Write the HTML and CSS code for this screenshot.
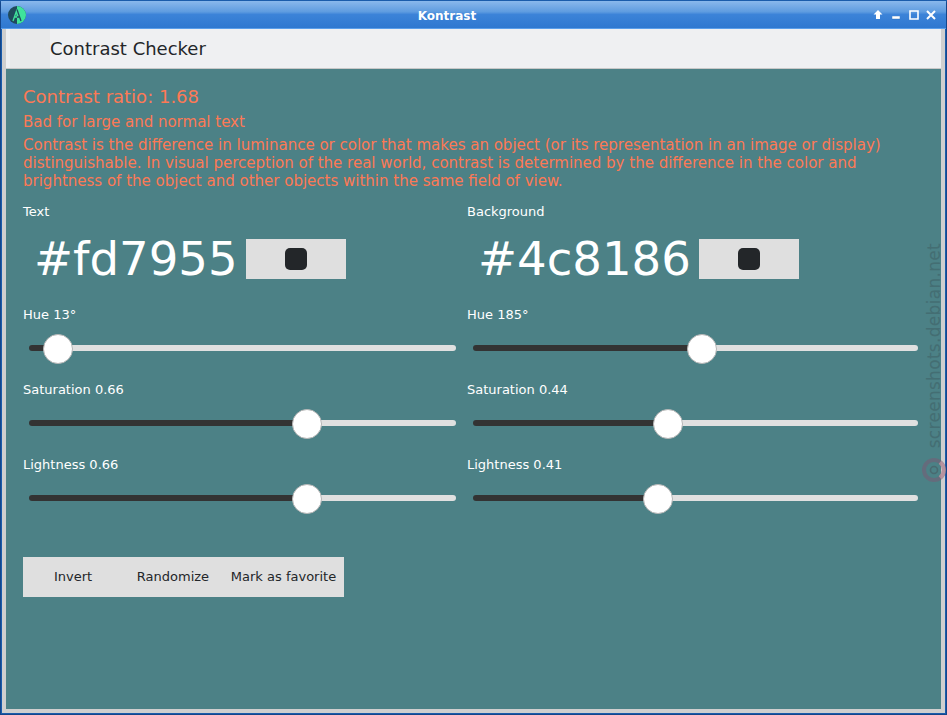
FILE: index.html
```html
<!DOCTYPE html>
<html lang="en">
<head>
<meta charset="utf-8">
<title>Kontrast</title>
<link rel="stylesheet" href="styles.css">
</head>
<body>
<div class="window">
  <header class="titlebar">
    <svg class="app-icon" width="18" height="18" viewBox="0 0 18 18">
      <circle cx="9" cy="9" r="9" fill="#1f4a5c"/>
      <path d="M9 0a9 9 0 0 1 0 18z" fill="#3fe39b"/>
      <path d="M5 15 9 3.5V11H6.5" fill="none" stroke="#3fe39b" stroke-width="1.3"/>
      <path d="M13 15 9 3.5M9 11h2.5" fill="none" stroke="#1f4a5c" stroke-width="1.3"/>
    </svg>
    <span class="win-title">Kontrast</span>
    <div class="win-buttons">
      <svg width="10" height="10" viewBox="0 0 10 10"><path d="M5 0 9.5 4.5H7V9H3V4.5H.5z" fill="#fff"/></svg>
      <svg width="8" height="4" viewBox="0 0 8 4" class="btn-min"><path d="M0 0h8v3H0z" fill="#fff" stroke="#1d5fae" stroke-width=".4"/></svg>
      <svg width="10" height="10" viewBox="0 0 10 10"><path d="M1 1h8v8H1z" fill="none" stroke="#fff" stroke-width="1.6"/></svg>
      <svg width="10" height="10" viewBox="0 0 10 10"><path d="M1 1l8 8M9 1l-8 8" fill="none" stroke="#fff" stroke-width="2"/></svg>
    </div>
  </header>
  <div class="client">
    <div class="appbar">
      <div class="appbar-handle"></div>
      <h1 class="appbar-title">Contrast Checker</h1>
    </div>
    <main class="content">
      <div class="ratio">Contrast ratio: 1.68</div>
      <div class="verdict">Bad for large and normal text</div>
      <p class="desc">Contrast is the difference in luminance or color that makes an object (or its representation in an image or display) distinguishable. In visual perception of the real world, contrast is determined by the difference in the color and brightness of the object and other objects within the same field of view.</p>
      <div class="columns">
        <section class="col">
          <div class="label">Text</div>
          <div class="hexrow"><span class="hex">#fd7955</span><span class="swatch-btn"><i class="swatch"></i></span></div>
          <div class="label">Hue 13°</div>
          <div class="slider"><span class="fill w-hue1"></span><span class="track"></span></div>
          <div class="label">Saturation 0.66</div>
          <div class="slider"><span class="fill w-sat1"></span><span class="track"></span></div>
          <div class="label">Lightness 0.66</div>
          <div class="slider"><span class="fill w-lig1"></span><span class="track"></span></div>
        </section>
        <section class="col">
          <div class="label">Background</div>
          <div class="hexrow"><span class="hex">#4c8186</span><span class="swatch-btn"><i class="swatch"></i></span></div>
          <div class="label">Hue 185°</div>
          <div class="slider"><span class="fill w-hue2"></span><span class="track"></span></div>
          <div class="label">Saturation 0.44</div>
          <div class="slider"><span class="fill w-sat2"></span><span class="track"></span></div>
          <div class="label">Lightness 0.41</div>
          <div class="slider"><span class="fill w-lig2"></span><span class="track"></span></div>
        </section>
      </div>
      <div class="actions">
        <span class="act act-invert">Invert</span>
        <span class="act act-random">Randomize</span>
        <span class="act act-fav">Mark as favorite</span>
      </div>
    </main>
  </div>
  <div class="watermark">
    <span class="wm-text">screenshots.debian.net</span>
    <svg class="wm-icon" width="24" height="24" viewBox="0 0 24 24"><circle cx="12" cy="12" r="10" fill="none" stroke="#6f6478" stroke-width="4" opacity=".7"/><path d="M18 4.2A10 10 0 0 1 18 19.8" fill="none" stroke="#c99aa5" stroke-width="4" opacity=".7"/><circle cx="12" cy="12" r="3.5" fill="none" stroke="#496a70" stroke-width="1.6"/></svg>
  </div>
</div>
</body>
</html>
```
FILE: styles.css
```css
* { box-sizing: border-box; margin: 0; padding: 0; }
html, body { width: 947px; height: 715px; overflow: hidden; background: #1c5ca8; }
body { font-family: "DejaVu Sans", sans-serif; }
.window {
  position: relative;
  width: 947px; height: 715px;
  display: flex; flex-direction: column;
  background: #1b5cab;
  border: 1px solid #14468a;
  border-top-color: #1b5cab;
  border-radius: 4px 4px 0 0;
}
.titlebar {
  height: 28px; flex: none;
  display: flex; align-items: center;
  padding: 0 6px 0 7px;
  position: relative;
  background: linear-gradient(#8ab8ec 0, #5f9ce0 40%, #3c83d8 50%, #2f78d0 100%);
  border-bottom: 1px solid #5a9eea;
}
.app-icon { flex: none; }
.win-title {
  position: absolute; left: 0; right: 53px; top: 8px;
  text-align: center;
  font: bold 12px/14px "DejaVu Sans", sans-serif;
  color: #fff;
}
.win-buttons { margin-left: auto; display: flex; align-items: center; gap: 7px; padding: 1px 4px 0 0; }
.win-buttons svg { display: block; }
.btn-min { margin-top: 6px; margin-left: 2px; margin-right: 2px; }
.client {
  flex: 1; min-height: 0;
  display: flex; flex-direction: column;
  margin: 0 1px 1px 1px;
  border: 4px solid #cfcfcf;
  border-top: 0;
  background: #4c8186;
}
.appbar {
  height: 40px; flex: none;
  display: flex; align-items: center;
  background: #eff0f2;
  border-bottom: 1px solid #c8c8c8;
}
.appbar-handle { width: 44px; height: 100%; background: #e8e9ea; flex: none; border-left: 4px solid #eff0f2; }
.appbar-title { font-size: 18px; font-weight: 400; color: #232629; line-height: 40px; }
.content { flex: 1; padding: 17px 17px 0; color: #fd7955; }
.ratio { font-size: 18px; line-height: 22px; }
.verdict { font-size: 15px; line-height: 18px; margin-top: 5px; }
.desc { font-size: 15px; line-height: 18px; margin-top: 5px; }
.columns { display: grid; grid-template-columns: 444px 451px; margin-top: 14px; }
.label { color: #fff; font-size: 13px; line-height: 16px; }
.hexrow { display: flex; align-items: center; height: 40px; margin: 19px 0 28px; padding-left: 11px; }
.hex { color: #fff; font-size: 46.6px; line-height: 40px; }
.swatch-btn { width: 100px; height: 40px; margin-left: 8px; background: #dfdfdf; display: flex; align-items: center; justify-content: center; flex: none; }
.swatch { display: block; width: 22px; height: 22px; background: #232629; border-radius: 5px; }
.slider {
  position: relative;
  height: 30px; margin: 10px 0 19px 6px; width: 427px;
  display: flex; align-items: center;
}
.track { flex: 1; height: 6px; background: #e0e0e0; border-radius: 0 3px 3px 0; }
.fill { position: relative; height: 6px; background: #333; border-radius: 3px 0 0 3px; flex: none; }
.fill::after {
  content: ""; position: absolute; right: -15px; top: -11px;
  width: 28px; height: 28px; border-radius: 50%;
  background: #fff; border: 1px solid #b5b5b5;
  z-index: 1;
}
.w-hue1 { width: 29px; }
.w-sat1 { width: 278px; }
.w-lig1 { width: 278px; }
.w-hue2 { width: 229px; }
.w-sat2 { width: 195px; }
.w-lig2 { width: 185px; }
.col:nth-child(2) .slider { width: 445px; }
.actions {
  display: flex; width: 321px; height: 40px; margin-top: 25px;
  background: #dfdfdf; color: #232629;
  font-size: 13px; line-height: 40px;
}
.act { display: block; text-align: center; flex: none; }
.act-invert { width: 100px; }
.act-random { width: 100px; }
.act-fav { width: 121px; }
.watermark {
  position: absolute; right: 0; top: 242px; width: 24px; height: 239px;
  display: flex; flex-direction: column; align-items: center; justify-content: space-between;
  pointer-events: none;
}
.wm-text {
  writing-mode: vertical-rl; transform: rotate(180deg);
  font-size: 17px; line-height: 18px; color: #436b70; opacity: .85;
  letter-spacing: .3px;
}
.wm-icon { flex: none; }
```
